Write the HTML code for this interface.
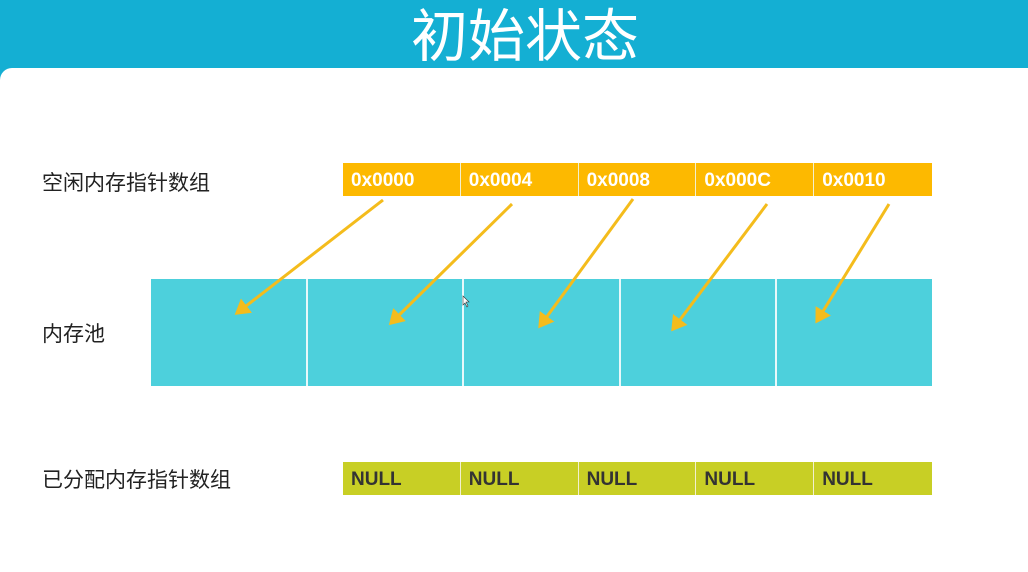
<!DOCTYPE html>
<html><head><meta charset="utf-8"><style>
*{margin:0;padding:0;box-sizing:border-box}
body{width:1028px;height:572px;background:#fff;position:relative;overflow:hidden;font-family:"Liberation Sans","Noto Sans CJK SC",sans-serif}
.hdr{position:absolute;left:0;top:0;width:1028px;height:90px;background:#14afd3}
.body{position:absolute;left:0;top:68px;width:1028px;height:504px;background:#fff;border-top-left-radius:12px}
.title{position:absolute;left:0;top:-6px;width:1050px;text-align:center;color:#fff;font-size:57px;line-height:76px;font-family:"Noto Sans CJK SC",sans-serif}
.lbl{position:absolute;left:42px;font-size:21px;color:#222;font-family:"Noto Sans CJK SC",sans-serif;line-height:24px}
.row{position:absolute;left:343px;width:589px;height:33px;display:flex}
.row div{width:118px;height:33px;border-right:1px solid #f2f0d0;font-weight:bold;font-size:19px;line-height:35px;padding-left:8px}
.row div:last-child{border-right:none}
.y div{background:#fdb900;color:#fff}
.g div{background:#c8cf25;color:#333}
.pool{position:absolute;left:151px;top:279px;width:781px;height:107px;display:flex}
.pool div{flex:1;background:#4dd0dc;border-right:2px solid #e8f8fa}
.pool div:last-child{border-right:none}
</style></head><body>
<div class="hdr"></div>
<div class="body"></div>
<div class="title">初始状态</div>
<div class="lbl" style="top:170px">空闲内存指针数组</div>
<div class="lbl" style="top:321px">内存池</div>
<div class="lbl" style="top:467px">已分配内存指针数组</div>
<div class="row y" style="top:163px"><div>0x0000</div><div>0x0004</div><div>0x0008</div><div>0x000C</div><div>0x0010</div></div>
<div class="pool"><div></div><div></div><div></div><div></div><div></div></div>
<div class="row g" style="top:462px"><div>NULL</div><div>NULL</div><div>NULL</div><div>NULL</div><div>NULL</div></div>
<svg style="position:absolute;left:0;top:0" width="1028" height="572">
<defs><marker id="a" markerWidth="6" markerHeight="6" refX="4" refY="3" orient="auto" markerUnits="strokeWidth"><path d="M0,0 L5,3 L0,6 Z" fill="#f4bc1c"/></marker></defs>
<g stroke="#f4bc1c" stroke-width="3" fill="none" marker-end="url(#a)">
<line x1="383" y1="200" x2="237" y2="313"/>
<line x1="512" y1="204" x2="391" y2="323"/>
<line x1="633" y1="199" x2="540" y2="326"/>
<line x1="767" y1="204" x2="673" y2="329"/>
<line x1="889" y1="204" x2="817" y2="321"/>
</g>
<path d="M463,296 L463,305 L465,303 L467,307 L468,306 L466,302 L469,302 Z" fill="#fff" stroke="#333" stroke-width="0.6"/>
</svg>
</body></html>
